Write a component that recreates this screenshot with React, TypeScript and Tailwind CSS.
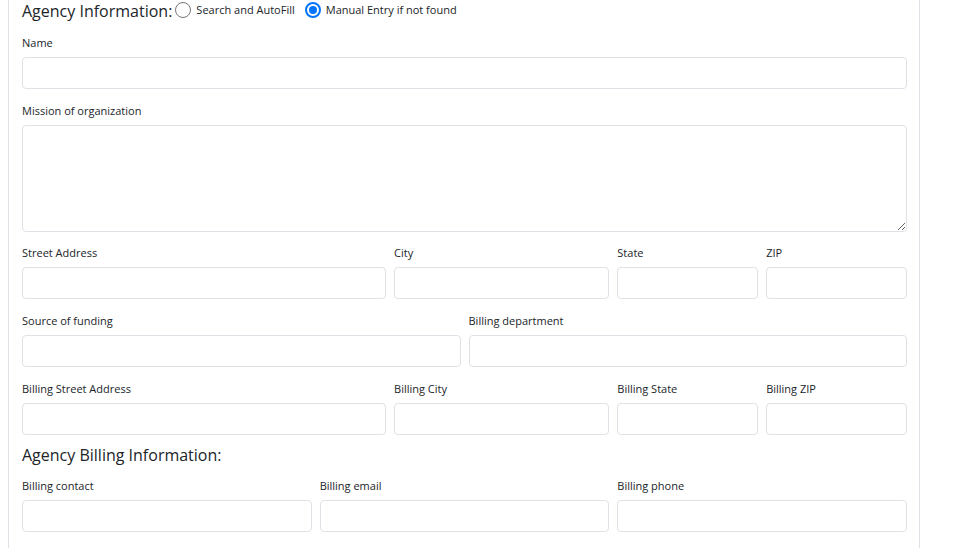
import React from 'react';

type Field = { label: string; span: string };

const inputClass =
  'block w-full h-[32px] rounded-[4px] border border-[#dee2e6] bg-white px-3 text-[13px] text-[#212529] outline-none';

const FieldGroup = ({ label, span, last }: Field & { last?: boolean }) => (
  <div className={`${span} ${last ? '' : 'mb-[14px]'}`}>
    <label className="block h-[16px] mb-[6px] text-[11px] leading-[16px] text-[#212529]">{label}</label>
    <input type="text" className={inputClass} />
  </div>
);

const Row = ({ fields, last }: { fields: Field[]; last?: boolean }) => (
  <div className="grid grid-cols-12 gap-x-[8px]">
    {fields.map((f) => (
      <FieldGroup key={f.label} {...f} last={last} />
    ))}
  </div>
);

const Radio = ({ label, checked }: { label: string; checked?: boolean }) => (
  <label className="flex items-center">
    {checked ? (
      <span className="flex h-[16px] w-[16px] items-center justify-center rounded-full border-2 border-[#0075ff] bg-white">
        <span className="h-[8px] w-[8px] rounded-full bg-[#0075ff]" />
      </span>
    ) : (
      <span className="h-[16px] w-[16px] rounded-full border border-[#767676] bg-white" />
    )}
    <span className="ml-[5px] text-[11px] leading-[16px] text-[#212529]">{label}</span>
  </label>
);

const App = () => {
  return (
    <div className="min-h-[548px] bg-white pl-2 pr-[40px] font-['Open_Sans',sans-serif]">
      <div className="min-h-[548px] border-x border-[#dee2e6] pl-[13px] pr-[12px]">
        {/* Agency header with lookup mode */}
        <div className="flex items-start h-[22px] mb-[13px]">
          <h2 className="text-[16px] font-medium leading-[22px] text-[#212529]">Agency Information:</h2>
          <div className="flex items-center h-[20px] ml-[3px] gap-x-[10px]">
            <Radio label="Search and AutoFill" />
            <Radio label="Manual Entry if not found" checked />
          </div>
        </div>

        <Row fields={[{ label: 'Name', span: 'col-span-12' }]} />

        <div className="mb-[13px]">
          <label className="block h-[16px] mb-[6px] text-[11px] leading-[16px] text-[#212529]">
            Mission of organization
          </label>
          <textarea className="block w-full h-[107px] rounded-[4px] border border-[#dee2e6] bg-white px-3 py-1 text-[13px] outline-none" />
        </div>

        <Row
          fields={[
            { label: 'Street Address', span: 'col-span-5' },
            { label: 'City', span: 'col-span-3' },
            { label: 'State', span: 'col-span-2' },
            { label: 'ZIP', span: 'col-span-2' },
          ]}
        />
        <Row
          fields={[
            { label: 'Source of funding', span: 'col-span-6' },
            { label: 'Billing department', span: 'col-span-6' },
          ]}
        />
        <Row
          last
          fields={[
            { label: 'Billing Street Address', span: 'col-span-5' },
            { label: 'Billing City', span: 'col-span-3' },
            { label: 'Billing State', span: 'col-span-2' },
            { label: 'Billing ZIP', span: 'col-span-2' },
          ]}
        />

        <h2 className="pt-[8px] mb-[11px] text-[16px] font-medium leading-[24px] text-[#212529]">
          Agency Billing Information:
        </h2>

        <Row
          fields={[
            { label: 'Billing contact', span: 'col-span-4' },
            { label: 'Billing email', span: 'col-span-4' },
            { label: 'Billing phone', span: 'col-span-4' },
          ]}
        />
      </div>
    </div>
  );
};

export default App;
